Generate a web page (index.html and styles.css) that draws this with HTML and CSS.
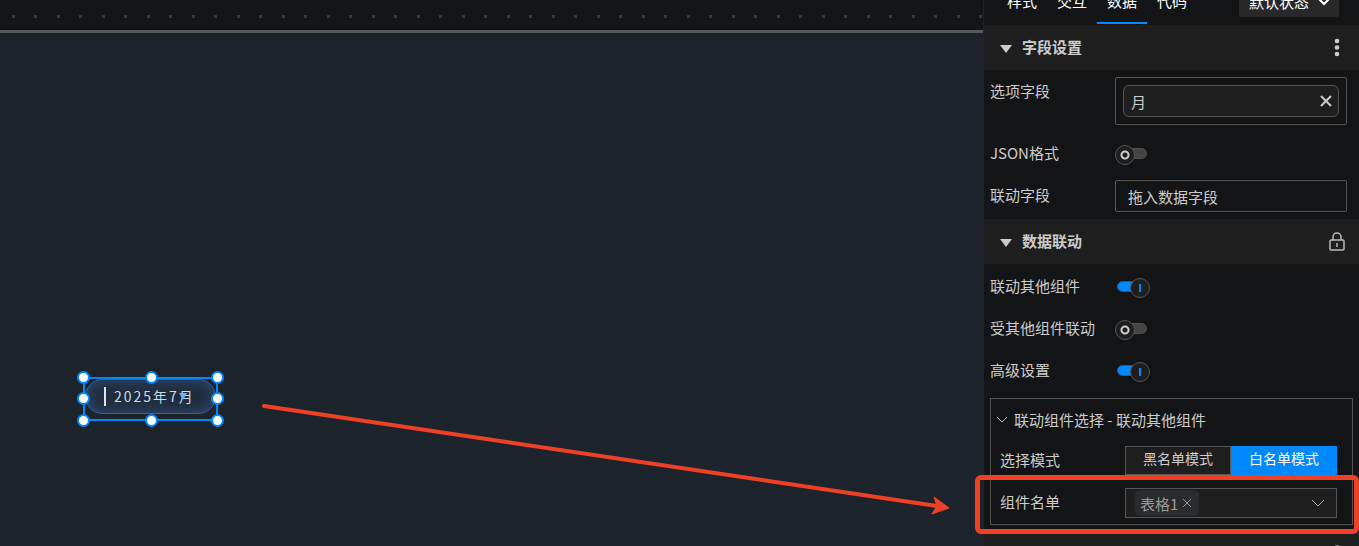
FILE: index.html
```html
<!DOCTYPE html>
<html lang="zh-CN">
<head>
    <meta charset="UTF-8">
    <title>数据联动</title>
    <link rel="stylesheet" href="styles.css">
</head>
<body>
    <div class="editor">
        <main class="workspace">
            <div class="dots"></div>
            <div class="canvas"></div>
            <div class="widget">
                <div class="month-picker">
                    <span class="cursor"></span>
                    <span class="month">2025年7月</span>
                </div>
                <span class="caret"></span>
                <i class="handle top left"></i>
                <i class="handle top center"></i>
                <i class="handle top right"></i>
                <i class="handle middle left"></i>
                <i class="handle middle right"></i>
                <i class="handle bottom left"></i>
                <i class="handle bottom center"></i>
                <i class="handle bottom right"></i>
            </div>
            <svg class="arrow" width="700" height="125" viewBox="0 0 700 125">
                <path d="M9 11 L682 111" stroke="#ef4026" stroke-width="4" stroke-linecap="round"/>
                <path d="M694 113 L679 102 L682 111 L677 119 Z" fill="#ef4026" stroke="#ef4026" stroke-width="1"/>
            </svg>
        </main>

        <aside class="panel">
            <nav class="tabs">
                <button class="tab">样式</button>
                <button class="tab">交互</button>
                <button class="tab active">数据</button>
                <button class="tab">代码</button>
                <div class="state">
                    <select aria-label="状态">
                        <option>默认状态</option>
                    </select>
                    <svg width="14" height="10" viewBox="0 0 14 10"><path d="M1 2l6 6 6-6" fill="none" stroke="#fff" stroke-width="2"/></svg>
                </div>
            </nav>

            <h2 class="section-title">
                <span class="triangle"></span><span class="title-text">字段设置</span>
                <button class="icon-btn" aria-label="更多">
                    <svg width="18" height="20" viewBox="0 0 18 20" fill="#ccc"><circle cx="9" cy="3" r="2.3"/><circle cx="9" cy="9.5" r="2.3"/><circle cx="9" cy="16" r="2.3"/></svg>
                </button>
            </h2>
            <div class="fields">
                <div class="row tall">
                    <span class="label">选项字段</span>
                    <div class="drop-box">
                        <div class="chip">月
                            <button aria-label="移除">
                                <svg width="12" height="12" viewBox="0 0 12 12"><path d="M1 1l10 10M11 1L1 11" stroke="#ccc" stroke-width="2"/></svg>
                            </button>
                        </div>
                    </div>
                </div>
                <div class="row">
                    <label class="label" for="json">JSON格式</label>
                    <input class="switch" type="checkbox" id="json">
                </div>
                <div class="row">
                    <label class="label" for="link-field">联动字段</label>
                    <input class="drop-input" type="text" id="link-field" placeholder="拖入数据字段">
                </div>
            </div>

            <h2 class="section-title">
                <span class="triangle"></span><span class="title-text">数据联动</span>
                <button class="icon-btn" aria-label="锁定">
                    <svg width="18" height="20" viewBox="0 0 18 20" fill="none" stroke="#bbb" stroke-width="1.5"><rect x="2" y="8" width="14" height="10" rx="1"/><path d="M5 8V5a4 4 0 0 1 8 0v3M9 11v4"/></svg>
                </button>
            </h2>
            <div class="switches">
                <div class="row">
                    <label class="label" for="link-others">联动其他组件</label>
                    <input class="switch" type="checkbox" id="link-others" checked>
                </div>
                <div class="row">
                    <label class="label" for="linked-by">受其他组件联动</label>
                    <input class="switch" type="checkbox" id="linked-by">
                </div>
                <div class="row">
                    <label class="label" for="advanced">高级设置</label>
                    <input class="switch" type="checkbox" id="advanced" checked>
                </div>
            </div>

            <div class="group">
                <button class="group-title">
                    <svg width="12" height="8" viewBox="0 0 12 8"><path d="M1 1l5 5 5-5" fill="none" stroke="#bbb"/></svg>
                    联动组件选择 - 联动其他组件
                </button>
                <div class="row">
                    <span class="label">选择模式</span>
                    <div class="modes">
                        <button class="mode">黑名单模式</button>
                        <button class="mode active">白名单模式</button>
                    </div>
                </div>
                <div class="row">
                    <span class="label">组件名单</span>
                    <div class="multi-select">
                        <span class="tag">表格1
                            <button aria-label="移除">
                                <svg width="8" height="8" viewBox="0 0 8 8"><path d="M0 0l8 8M8 0L0 8" stroke="#999"/></svg>
                            </button>
                        </span>
                        <button aria-label="展开">
                            <svg width="14" height="8" viewBox="0 0 14 8"><path d="M1 1l6 6 6-6" fill="none" stroke="#aaa"/></svg>
                        </button>
                    </div>
                </div>
                <div class="highlight"></div>
            </div>

            <h2 class="section-title">
                <button class="icon-btn" aria-label="锁定">
                    <svg width="18" height="20" viewBox="0 0 18 20" fill="none" stroke="#bbb" stroke-width="1.5"><rect x="2" y="8" width="14" height="10" rx="1"/><path d="M5 8V5a4 4 0 0 1 8 0v3M9 11v4"/></svg>
                </button>
            </h2>
        </aside>
    </div>
</body>
</html>
```
FILE: styles.css
```css
:root {
    --panel: #131416;
    --raised: #1e1e1e;
    --line: #555;
    --blue: #0088ff;
    --red: #ef4026;
    --text: #ccc;
}

* {
    box-sizing: border-box;
}

body {
    margin: 0;
    background: var(--panel);
    color: var(--text);
    font-family: "Noto Sans CJK SC", sans-serif;
    font-size: 15px;
}

button,
input,
select {
    font: inherit;
    color: inherit;
}

button {
    padding: 0;
    border: none;
    background: none;
    cursor: pointer;
}

svg {
    display: block;
}

.editor {
    display: flex;
    height: 100vh;
    overflow: hidden;
}

/* Canvas side */
.workspace {
    position: relative;
    flex: 1;
    display: flex;
    flex-direction: column;
    min-width: 0;
}

.dots {
    height: 33px;
    border-bottom: 3px solid #555;
    background: repeating-linear-gradient(90deg, transparent 0 12px, #38393b 12px 15px, transparent 15px 45px) 0 15px / 45px 3px repeat-x,
        repeating-linear-gradient(90deg, transparent 0 34px, #38393b 34px 37px, transparent 37px 45px) 0 15px / 45px 3px repeat-x;
    border-image: linear-gradient(#555, #999, #555) 1;
}

.canvas {
    flex: 1;
    background: #1c232b;
}

.widget {
    position: absolute;
    left: 83px;
    top: 377px;
    width: 135px;
    height: 44px;
    border: 2px solid var(--blue);
}

.month-picker {
    display: flex;
    align-items: center;
    gap: 8px;
    height: 35px;
    padding-left: 18px;
    border: 1px solid #365f99;
    border-radius: 18px;
    background: #202c3b;
    box-shadow: inset 0 0 14px #2f4f80;
    color: #c4dcec;
    font-size: 14px;
    letter-spacing: 2px;
    white-space: nowrap;
}

.month {
    padding-bottom: 2px;
}

.cursor {
    width: 2px;
    height: 19px;
    background: #dde5ee;
}

.caret {
    position: absolute;
    left: 94px;
    top: 14px;
    border: 4px solid transparent;
    border-top: 7px solid #64b5f6;
}

.handle {
    position: absolute;
    width: 13px;
    height: 13px;
    border: 2px solid var(--blue);
    border-radius: 50%;
    background: #fff;
}

.handle.top { top: -8px; }
.handle.middle { top: calc(50% - 7px); }
.handle.bottom { bottom: -8px; }
.handle.left { left: -8px; }
.handle.center { left: calc(50% - 6px); }
.handle.right { right: -8px; }

.arrow {
    position: absolute;
    left: 255px;
    top: 395px;
}

/* Settings panel */
.panel {
    flex: none;
    width: 376px;
    border-left: 1px solid #222;
}

.tabs {
    display: flex;
    height: 40px;
    margin-top: -15px;
    padding-left: 13px;
    color: #fff;
}

.tab {
    height: 39px;
    padding: 0 10px 6px;
    border-bottom: 2px solid transparent;
}

.tab.active {
    border-color: var(--blue);
}

.state {
    display: flex;
    align-items: center;
    justify-content: space-between;
    width: 100px;
    height: 32px;
    margin: 0 20px 0 auto;
    padding: 0 8px 0 10px;
    border-radius: 2px;
    background: #282828;
}

.state select {
    padding: 0;
    border: none;
    appearance: none;
    background: none;
}

.section-title {
    display: flex;
    align-items: center;
    height: 45px;
    margin: 0;
    padding: 0 13px 0 16px;
    background: var(--raised);
    font-size: 15px;
    font-weight: bold;
}

.title-text {
    padding-bottom: 2px;
}

.triangle {
    margin: 2px 10px 0 0;
    border: 6px solid transparent;
    border-top: 8px solid #ccc;
    border-bottom: none;
}

.icon-btn {
    margin-left: auto;
}

.row {
    display: flex;
    align-items: center;
    height: 42px;
}

.label {
    flex: none;
    width: 125px;
    padding-bottom: 3px;
}

.fields {
    padding: 8px 12px 2px 6px;
}

.fields .tall {
    align-items: flex-start;
    height: 55px;
}

.tall .label {
    padding-top: 2px;
}

.drop-box {
    flex: 1;
    margin-top: -1px;
    padding: 7px;
    border: 1px solid var(--line);
    border-radius: 2px;
}

.chip {
    display: flex;
    align-items: center;
    justify-content: space-between;
    height: 32px;
    padding: 0 6px 0 7px;
    border: 1px solid var(--line);
    border-radius: 6px;
    background: var(--raised);
}

.drop-input {
    flex: 1;
    min-width: 0;
    height: 32px;
    padding: 0 12px;
    border: 1px solid var(--line);
    border-radius: 2px;
    background: none;
}

.drop-input::placeholder {
    color: var(--text);
    opacity: 1;
}

.switches {
    padding: 2px 6px 6px;
}

.switch {
    position: relative;
    width: 33px;
    height: 18px;
    margin: 0;
    appearance: none;
}

/* track */
.switch::before {
    content: "";
    position: absolute;
    inset: 3px 1px 4px 2px;
    border: 1px solid #505050;
    border-radius: 6px;
    background: #444;
}

/* knob */
.switch::after {
    content: "";
    position: absolute;
    left: 0;
    top: 0;
    width: 18px;
    height: 18px;
    border: 1px solid #555;
    border-radius: 50%;
    background: radial-gradient(circle, transparent 2px, #ccc 3px 4px, transparent 5px) var(--raised);
}

.switch:checked::before {
    background: var(--blue);
}

.switch:checked::after {
    left: 15px;
    background: linear-gradient(var(--blue), var(--blue)) center / 2px 8px no-repeat var(--raised);
}

.group {
    position: relative;
    margin: 0 6px 7px;
    padding: 0 15px 0 9px;
    border: 1px solid var(--line);
}

.group-title {
    display: flex;
    align-items: center;
    gap: 6px;
    height: 41px;
    margin-left: -4px;
}

.modes,
.multi-select {
    flex: 1;
    display: flex;
}

.modes {
    margin-bottom: 2px;
}

.mode {
    flex: 1;
    height: 29px;
    padding-bottom: 4px;
    border: 1px solid var(--line);
    background: var(--raised);
    font-size: 14px;
}

.mode.active {
    border-color: var(--blue);
    background: var(--blue);
    color: #fff;
}

.multi-select {
    align-items: center;
    justify-content: space-between;
    height: 30px;
    padding: 0 11px 0 9px;
    border: 1px solid var(--line);
    background: var(--raised);
}

.tag {
    display: flex;
    align-items: center;
    gap: 5px;
    height: 26px;
    padding: 0 8px 0 5px;
    border-radius: 5px;
    background: #292b2c;
    color: #999;
}

.highlight {
    position: absolute;
    inset: 76px -7px -10px -16px;
    border: 5px solid var(--red);
    border-radius: 6px;
    pointer-events: none;
}
```
